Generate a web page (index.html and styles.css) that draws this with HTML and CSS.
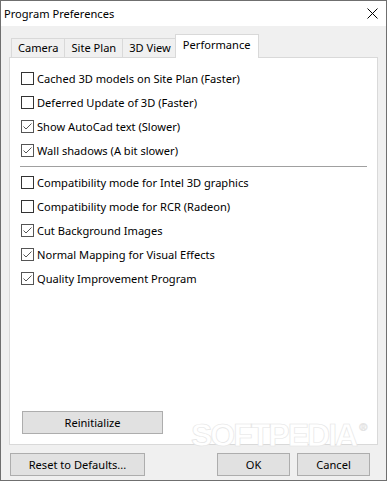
FILE: index.html
```html
<html>
<head>
<link rel="stylesheet" href="styles.css">
</head>
<body>

<div class="window">
  <div class="titlebar">
    <span class="title">Program Preferences</span>
    <span class="close">
      <svg width="11" height="11" viewBox="0 0 11 11"><path d="M0.5 0.5 L10.5 10.5 M10.5 0.5 L0.5 10.5" stroke="#000" stroke-width="1" fill="none"/></svg>
    </span>
  </div>

  <div class="content">
    <div class="tabs">
      <div class="tab">Camera</div>
      <div class="tab">Site Plan</div>
      <div class="tab">3D View</div>
      <div class="tab active">Performance</div>
    </div>

    <div class="panel">
      <div class="row"><span class="box"></span>Cached 3D models on Site Plan (Faster)</div>
      <div class="row"><span class="box"></span>Deferred Update of 3D (Faster)</div>
      <div class="row"><span class="box checked"><svg width="13" height="13" viewBox="0 0 13 13"><path d="M2.5 6.5 L5 9 L10.5 3.5" stroke="#555" stroke-width="1" fill="none"/></svg></span>Show AutoCad text (Slower)</div>
      <div class="row"><span class="box checked"><svg width="13" height="13" viewBox="0 0 13 13"><path d="M2.5 6.5 L5 9 L10.5 3.5" stroke="#555" stroke-width="1" fill="none"/></svg></span>Wall shadows (A bit slower)</div>

      <div class="sep"></div>

      <div class="row"><span class="box"></span>Compatibility mode for Intel 3D graphics</div>
      <div class="row"><span class="box"></span>Compatibility mode for RCR (Radeon)</div>
      <div class="row"><span class="box checked"><svg width="13" height="13" viewBox="0 0 13 13"><path d="M2.5 6.5 L5 9 L10.5 3.5" stroke="#555" stroke-width="1" fill="none"/></svg></span>Cut Background Images</div>
      <div class="row"><span class="box checked"><svg width="13" height="13" viewBox="0 0 13 13"><path d="M2.5 6.5 L5 9 L10.5 3.5" stroke="#555" stroke-width="1" fill="none"/></svg></span>Normal Mapping for Visual Effects</div>
      <div class="row"><span class="box checked"><svg width="13" height="13" viewBox="0 0 13 13"><path d="M2.5 6.5 L5 9 L10.5 3.5" stroke="#555" stroke-width="1" fill="none"/></svg></span>Quality Improvement Program</div>

      <button class="btn reinit">Reinitialize</button>
    </div>

    <div class="footer">
      <button class="btn reset">Reset to Defaults...</button>
      <button class="btn ok">OK</button>
      <button class="btn cancel">Cancel</button>
    </div>
  </div>

  <div class="watermark">SOFTPEDIA<span class="reg">&reg;</span></div>
</div>

</body>
</html>
```

FILE: styles.css
```css
body {
	margin: 0;
	font-family: "Noto Sans", "Open Sans", sans-serif;
	font-size: 11.1px;
	color: #000;
	background: #fff;
}

.window {
	position: relative;
	width: 387px;
	height: 481px;
	box-sizing: border-box;
	border: 1px solid #6f6f6f;
	background: #f0f0f0;
	overflow: hidden;
	display: flex;
	flex-direction: column;
}

.titlebar {
	height: 25px;
	background: #fff;
	display: flex;
	align-items: center;
	justify-content: space-between;
	padding: 0 8px 0 3px;
}
.title {
	line-height: 25px;
}
.close {
	display: flex;
}

.content {
	flex: 1;
	padding: 8px 8px 4px 8px;
	display: flex;
	flex-direction: column;
}

/* tabs */
.tabs {
	display: flex;
	align-items: flex-end;
	padding-left: 2px;
	height: 23px;
}
.tab {
	height: 18px;
	line-height: 17px;
	padding: 0 6px;
	border: 1px solid #d9d9d9;
	border-bottom: none;
	background: #f0f0f0;
}
.tab + .tab {
	margin-left: -1px;
}
.tab.active {
	position: relative;
	z-index: 1;
	margin-left: -3px;
	margin-bottom: -1px;
	height: 23px;
	line-height: 19px;
	padding: 0 7px;
	background: #fff;
}

.panel {
	height: 388px;
	box-sizing: border-box;
	border: 1px solid #d9d9d9;
	background: #fff;
	padding: 8px 10px 10px 11px;
	display: flex;
	flex-direction: column;
}

.row {
	height: 24px;
	display: flex;
	align-items: center;
	white-space: nowrap;
}
.box {
	width: 13px;
	height: 13px;
	box-sizing: border-box;
	border: 1px solid #333;
	background: #fff;
	margin-right: 3px;
	flex: none;
	position: relative;
}
.box.checked {
	border-color: #555;
}
.box svg {
	position: absolute;
	left: -1px;
	top: -1px;
}

.sep {
	height: 1px;
	width: 347px;
	background: #a0a0a0;
	margin: 4px 0 3px -1px;
}

/* buttons */
.btn {
	height: 23px;
	box-sizing: border-box;
	border: 1px solid #adadad;
	background: #e1e1e1;
	font-family: inherit;
	font-size: 11.1px;
	color: #000;
	padding: 0;
	margin: 0;
}
.reinit {
	margin-top: auto;
	margin-left: 1px;
	width: 141px;
}

.footer {
	display: flex;
	margin-top: 8px;
	gap: 7px;
}
.reset {
	width: 135px;
	margin-left: 1px;
	margin-right: auto;
}
.ok, .cancel {
	width: 73px;
}
.cancel {
	margin-right: 8px;
}

.watermark {
	position: absolute;
	left: 190px;
	top: 416px;
	font-family: "Liberation Sans", sans-serif;
	font-weight: bold;
	font-size: 32px;
	letter-spacing: -2px;
	color: #fff;
	-webkit-text-stroke: 0.6px #e4e4e4;
	pointer-events: none;
}
.watermark .reg {
	font-size: 11px;
	letter-spacing: 0;
	vertical-align: top;
	position: relative;
	top: 4px;
	left: 3px;
}
```
